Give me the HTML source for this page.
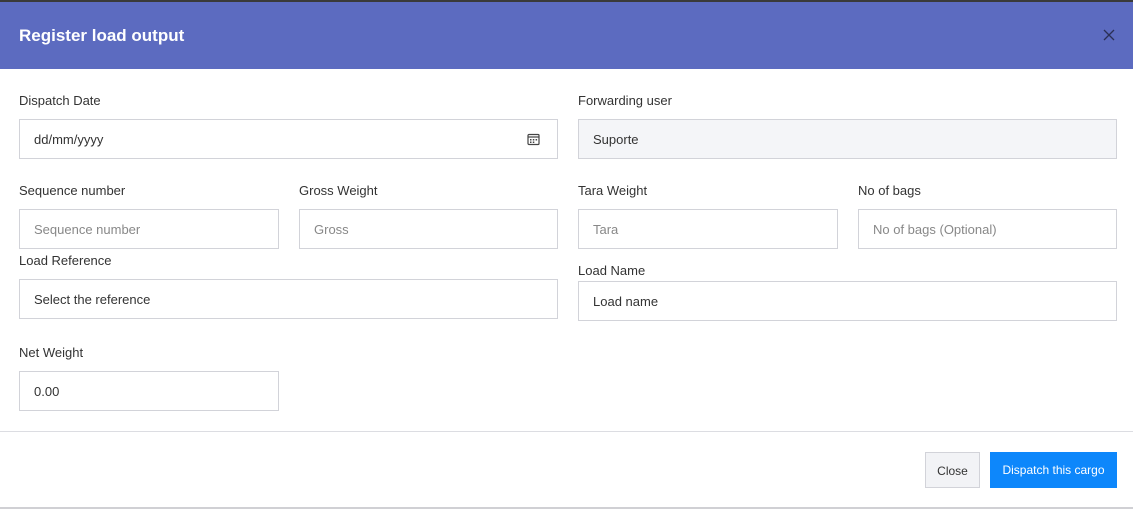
<!DOCTYPE html>
<html><head><style>
*{box-sizing:border-box;margin:0;padding:0}
body{width:1133px;height:510px;background:#fff;font-family:"Liberation Sans",sans-serif;position:relative;overflow:hidden;color:#333}
.top{position:absolute;left:0;top:0;width:1133px;height:2px;background:#3a3a3a}
.hdr{position:absolute;left:0;top:2px;width:1133px;height:67px;background:#5c6bc0}
.hdr h1{position:absolute;left:19px;top:24px;color:#fff;font-size:17px;font-weight:bold}
.x{position:absolute;left:1103px;top:27px;width:12px;height:12px}
.lbl{position:absolute;font-size:13px;color:#333}
.in{position:absolute;height:40px;border:1px solid #d2d3d9;font-size:13px;padding-left:14px;line-height:40px;color:#333;background:#fff}
.ph{color:#888}
.dis{background:#f4f5f8}
.foot{position:absolute;left:0;top:431px;width:1133px;height:1px;background:#dcdde2}
.bot{position:absolute;left:0;top:507px;width:1133px;height:2px;background:#d0d0d4}
.btn{position:absolute;top:452px;height:36px;font-size:12px;line-height:36px;text-align:center}
</style></head><body>
<div class="top"></div>
<div class="hdr"><h1>Register load output</h1>
<svg class="x" viewBox="0 0 12 12"><path d="M1 1L11 11M11 1L1 11" stroke="#2a2f55" stroke-width="1.3"/></svg></div>

<div class="lbl" style="left:19px;top:93px">Dispatch Date</div>
<div class="in" style="left:19px;top:119px;width:539px">dd/mm/yyyy
<svg style="position:absolute;left:507px;top:13px" width="13" height="13" viewBox="0 0 13 13"><rect x="1" y="1.5" width="11" height="10" rx="1" fill="none" stroke="#444" stroke-width="1.2"/><line x1="1" y1="4" x2="12" y2="4" stroke="#444" stroke-width="1.2"/><rect x="3" y="6" width="1.5" height="1.5" fill="#444"/><rect x="5.8" y="6" width="1.5" height="1.5" fill="#444"/><rect x="8.6" y="6" width="1.5" height="1.5" fill="#444"/><rect x="3" y="8.5" width="1.5" height="1.5" fill="#444"/><rect x="5.8" y="8.5" width="1.5" height="1.5" fill="#444"/></svg></div>
<div class="lbl" style="left:578px;top:93px">Forwarding user</div>
<div class="in dis" style="left:578px;top:119px;width:539px">Suporte</div>

<div class="lbl" style="left:19px;top:183px">Sequence number</div>
<div class="in ph" style="left:19px;top:209px;width:260px">Sequence number</div>
<div class="lbl" style="left:299px;top:183px">Gross Weight</div>
<div class="in ph" style="left:299px;top:209px;width:259px">Gross</div>
<div class="lbl" style="left:578px;top:183px">Tara Weight</div>
<div class="in ph" style="left:578px;top:209px;width:260px">Tara</div>
<div class="lbl" style="left:858px;top:183px">No of bags</div>
<div class="in ph" style="left:858px;top:209px;width:259px">No of bags (Optional)</div>

<div class="lbl" style="left:19px;top:253px">Load Reference</div>
<div class="in" style="left:19px;top:279px;width:539px">Select the reference</div>
<div class="lbl" style="left:578px;top:263px">Load Name</div>
<div class="in" style="left:578px;top:281px;width:539px">Load name</div>

<div class="lbl" style="left:19px;top:345px">Net Weight</div>
<div class="in" style="left:19px;top:371px;width:260px">0.00</div>

<div class="foot"></div>
<div class="btn" style="left:925px;width:55px;background:#f2f3f6;border:1px solid #d2d3d9;color:#333">Close</div>
<div class="btn" style="left:990px;width:127px;background:#0d87fb;color:#fff">Dispatch this cargo</div>
<div class="bot"></div>
</body></html>
